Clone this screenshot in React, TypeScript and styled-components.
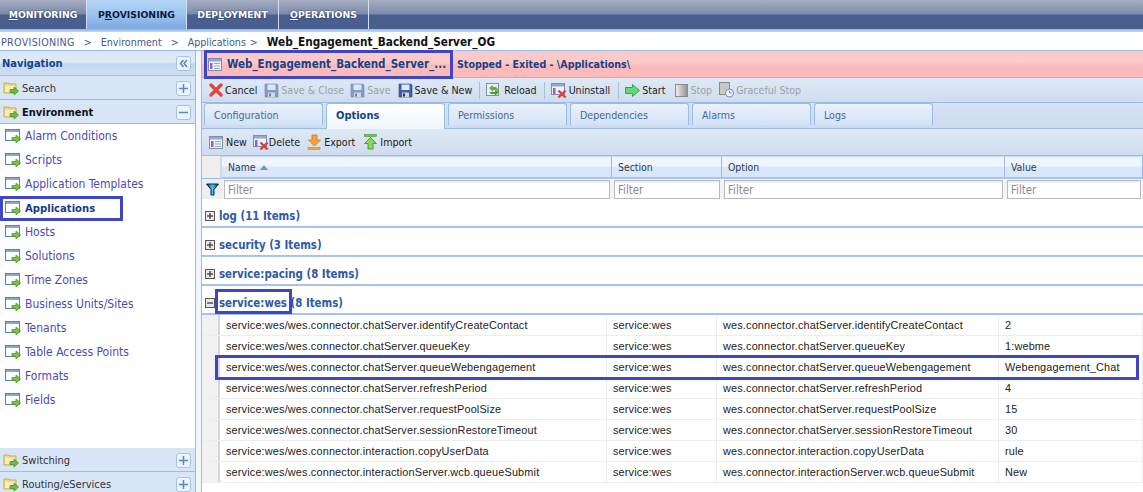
import React from "react";
import styled, { createGlobalStyle } from "styled-components";

const Global = createGlobalStyle`
  html, body { margin: 0; padding: 0; background: #fff; }
  * { box-sizing: border-box; }
`;
const COND = `"DejaVu Sans Condensed", "DejaVu Sans", sans-serif`;
const ARIAL = `"Liberation Sans", Arial, sans-serif`;

const Page = styled.div`
  position: relative; width: 1143px; height: 492px; overflow: hidden; background: #fff;
  font-family: ${COND}; font-size: 11px;
`;
const TopNav = styled.div`
  display: flex; height: 29px;
  background: linear-gradient(#a4adc0 0, #7d8aa8 14px, #495f90 15px, #495f90 100%);
`;
const TopTab = styled.div<{ $active?: boolean; $w: number }>`
  width: ${p => p.$w}px; display: flex; align-items: center; justify-content: center;
  border-right: 1px solid #d5deee;
  font: bold 9.3px "DejaVu Sans", sans-serif;
  color: ${p => (p.$active ? "#0d1a3a" : "#fff")};
  text-shadow: ${p => (p.$active ? "none" : "0 0 2px #24345c")};
  background: ${p => (p.$active ? "linear-gradient(#b5d6f8, #9cc3ef 50%, #7aa8e0)" : "transparent")};
`;
const NavRule = styled.div`
  height: 3px; background: linear-gradient(#8fb3e4, #c5d9f1);
`;
const Breadcrumb = styled.div`
  height: 18px; display: flex; align-items: center; padding: 1px 0 0 1px; white-space: pre;
  color: #3c5a94; font: 10.6px ${COND};
`;
const Crumb = styled.span<{ $gap: number; $wide?: boolean }>`
  margin-right: ${p => p.$gap}px;
  letter-spacing: ${p => (p.$wide ? "0.33px" : "0")};
`;
const CrumbNow = styled.span`
  font: bold 11.7px ${COND}; color: #111; margin-left: 5px;
`;
const Body = styled.div`
  display: flex; height: 446px; border-top: 1px solid #99bbe8;
`;
const Sidebar = styled.div`
  width: 196px; display: flex; flex-direction: column; border-right: 1px solid #99bbe8;
`;
const Gutter = styled.div`
  width: 5px; background: #f1f6fc;
`;
const SideHead = styled.div`
  height: 25px; display: flex; align-items: center; justify-content: space-between; padding: 1px 4px 0 2px;
  background: linear-gradient(#d9e6f7 0, #e0ebf9 45%, #c3d7f1 55%, #cfe0f5 100%);
  border-bottom: 1px solid #99bbe8;
  color: #15428b; font: bold 11px ${COND};
`;
const SideTool = styled.div`
  width: 15px; height: 15px; border: 1px solid #a6c2e8; border-radius: 3px; background: #eef4fc;
  display: flex; align-items: center; justify-content: center;
`;
const Accordion = styled.div<{ $open?: boolean }>`
  height: 24px; flex-shrink: 0; display: flex; align-items: center; padding: 1px 4px 0 3px; gap: 3px;
  background: #d8e5f6; border-bottom: 1px solid #99bbe8;
  color: ${p => (p.$open ? "#111" : "#333")};
  font: ${p => (p.$open ? "bold 11px" : "11px")} ${COND};
  > span { flex: 1; }
`;
const NavList = styled.div`
  flex: 1; background: #fff;
`;
const NavItem = styled.div<{ $active?: boolean }>`
  height: 24px; display: flex; align-items: center; padding-left: 5px; gap: 4px;
  color: ${p => (p.$active ? "#17398c" : "#4a4bb0")};
  font: ${p => (p.$active ? "bold 11.2px" : "12px")} ${COND};
`;
const Main = styled.div`
  flex: 1; min-width: 0; border-left: 1px solid #99bbe8; display: flex; flex-direction: column;
`;
const TitleBar = styled.div`
  height: 27px; flex-shrink: 0; background: linear-gradient(#fdc9c9 0, #fdc9c9 45%, #fdbaba 55%, #fdbaba 100%);
  display: flex; align-items: center; padding-left: 6px; color: #15428b;
  font: bold 10.6px ${COND}; border-bottom: 1px solid #99bbe8;
`;
const TitleName = styled.span`
  width: 230px; margin-left: 4px; font: bold 11.5px ${COND}; white-space: nowrap;
`;
const Toolbar = styled.div<{ $h: number }>`
  height: ${p => p.$h}px; display: flex; align-items: center; padding-left: 7px;
  background: linear-gradient(#dfe9f6, #cfdcee);
  border-bottom: 1px solid #99bbe8; flex-shrink: 0;
`;
const ToolBtn = styled.div<{ $off?: boolean; $gap?: number; $mr?: number }>`
  display: flex; align-items: center; gap: ${p => p.$gap ?? 2}px; margin-right: ${p => p.$mr ?? 7}px;
  color: ${p => (p.$off ? "#9aa0a8" : "#1b1b1b")}; font: 10.6px ${COND}; white-space: nowrap;
`;
const Sep = styled.div`
  width: 1px; height: 17px; background: #aabdd8; margin-right: 6px;
`;
const TabStrip = styled.div`
  height: 26px; display: flex; align-items: flex-end; padding: 0 0 3px 2px; gap: 3px;
  background: linear-gradient(#d5e2f3, #cedcef); border-bottom: 1px solid #99bbe8; flex-shrink: 0;
`;
const Tab = styled.div<{ $active?: boolean }>`
  width: 119px; padding: ${p => (p.$active ? "0 0 3px 9px" : "1px 0 0 9px")}; display: flex; align-items: center;
  border: 1px solid #99bbe8; border-bottom: 0; border-radius: 3px 3px 0 0;
  color: ${p => (p.$active ? "#15428b" : "#4a6690")};
  font: ${p => (p.$active ? "bold 11px" : "10.6px")} ${COND};
  background: ${p => (p.$active ? "linear-gradient(#fff, #f0f6fd)" : "linear-gradient(#e9f1fb, #d3e3f8)")};
  margin-bottom: ${p => (p.$active ? "-4px" : "0")};
  height: ${p => (p.$active ? "26px" : "22px")};
  z-index: ${p => (p.$active ? 1 : 0)};
`;
const GridHead = styled.div`
  display: grid; grid-template-columns: 20px 390px 110px 283px 1fr; height: 23px; flex-shrink: 0;
`;
const HeadCorner = styled.div`
  background: #eeeeee; border-bottom: 1px solid #99bbe8; border-right: 2px solid #d8d8d8;
`;
const HeadCell = styled.div`
  display: flex; align-items: center; gap: 4px; padding-left: 6px; color: #2c3b55; font: 10.4px ${COND};
  background: linear-gradient(#eff5fd 0, #eff5fd 45%, #dae7f8 50%, #dae7f8 100%);
  border-right: 1px solid #99bbe8; border-bottom: 2px solid #a9c4ea; border-top: 1px solid #c9dbf3;
`;
const FilterRow = styled.div`
  display: grid; grid-template-columns: 20px 390px 110px 283px 1fr; height: 20px; flex-shrink: 0;
`;
const FilterIconCell = styled.div`
  background: #eeeeee; display: flex; align-items: center; justify-content: center;
`;
const FilterCell = styled.div`
  padding: 1px 2px 0 2px; background: #f4f4f4;
`;
const FilterInput = styled.div`
  height: 19px; border: 1px solid #b5b8c8; background: linear-gradient(#e8e8e8 0, #fff 3px);
  color: #8a8a8a; font: 11.4px ${COND}; padding: 2px 0 0 3px;
`;
const GroupRow = styled.div`
  height: 29px; flex-shrink: 0; display: flex; align-items: center; padding: 6px 0 0 3px; gap: 4px;
  color: #2e5aa6; font: bold 11.4px ${COND};
  border-bottom: 2px solid #a5c2ea;
`;
const Expander = styled.div<{ $open?: boolean }>`
  width: 10px; height: 10px; border: 1px solid #555; background: #e8e8e8; position: relative;
  &::before { content: ""; position: absolute; left: 1px; right: 1px; top: 3px; height: 2px; background: #333; transform: scaleY(.6); }
  &::after { content: ""; position: absolute; top: 1px; bottom: 1px; left: 3px; width: 2px; background: #333; transform: scaleX(.6); display: ${p => (p.$open ? "none" : "block")}; }
`;
const DataRow = styled.div`
  display: grid; grid-template-columns: 18px 387px 110px 282px 1fr; height: 21px; flex-shrink: 0;
  border-bottom: 1px solid #ededed; font: 10.9px ${ARIAL}; color: #222; letter-spacing: 0.16px;
`;
const RowGutter = styled.div`
  background: #f1f1f1; border-right: 2px solid #d6d6d6;
`;
const Cell = styled.div`
  display: flex; align-items: center; padding: 0 0 1px 6px; border-right: 1px solid #ededed; white-space: nowrap; overflow: hidden;
`;
const Highlight = styled.div<{ $x: number; $y: number; $w: number; $h: number }>`
  position: absolute; left: ${p => p.$x}px; top: ${p => p.$y}px; width: ${p => p.$w}px; height: ${p => p.$h}px;
  border: 3px solid #3f46c4; pointer-events: none; z-index: 5;
`;

const FolderArrow = () => (
  <svg width="16" height="16" viewBox="0 0 16 16">
    <path d="M1 3h4l1 1h7v9H1z" fill="#f6dc85" stroke="#c9a94e" />
    <path d="M2 6h10v6H2z" fill="#fbeeb8" />
    <path d="M7 9.500h4V7l4.500 4L11 15v-2.500H7z" fill="#6fbb3c" stroke="#3f8a22" strokeWidth=".7" />
  </svg>
);
const WinArrow = () => (
  <svg width="16" height="16" viewBox="0 0 16 16" style={{ flexShrink: 0 }}>
    <rect x=".5" y="1.5" width="14" height="11" fill="#fff" stroke="#5b7fbe" />
    <rect x="1" y="2" width="13" height="2" fill="#8aa7d8" />
    <path d="M7 9.500h4V7l4.500 4L11 15v-2.500H7z" fill="#7cc142" stroke="#3f8a22" strokeWidth=".7" />
  </svg>
);
const AppForm = () => (
  <svg width="15" height="15" viewBox="0 0 15 15">
    <rect x=".5" y="1.5" width="13" height="12" fill="#f4f4f4" stroke="#7b8fb0" />
    <rect x="1" y="2" width="12" height="2.5" fill="#8ea9d6" />
    <rect x="2" y="6" width="2.5" height="6" fill="#9a5ad8" />
    <path d="M6 6.500h6M6 9h6M6 11.500h6" stroke="#9aa7bb" />
  </svg>
);
const FormDelete = () => (
  <svg width="16" height="16" viewBox="0 0 16 16">
    <rect x=".5" y="1.5" width="13" height="11" fill="#f4f4f4" stroke="#7b8fb0" />
    <rect x="1" y="2" width="12" height="2.5" fill="#8ea9d6" />
    <rect x="2" y="6" width="2.5" height="6" fill="#9a5ad8" />
    <path d="M7.500 8.500l7 7M14.500 8.500l-7 7" stroke="#d9413c" strokeWidth="2.4" />
  </svg>
);
const RedX = () => (
  <svg width="14" height="14" viewBox="0 0 14 14">
    <path d="M2 2l10 10M12 2L2 12" stroke="#e2453f" strokeWidth="3.4" strokeLinecap="round" />
  </svg>
);
const Floppy = ({ off }: { off?: boolean }) => (
  <svg width="15" height="15" viewBox="0 0 15 15" opacity={off ? 0.55 : 1}>
    <path d="M1 1h12l1 1v12H1z" fill="#3d5fae" stroke="#2b4384" strokeWidth=".6" />
    <rect x="3.5" y="1.5" width="8" height="5.5" fill="#dfe7f5" />
    <rect x="4" y="9.5" width="7" height="4.5" fill="#d5d5d5" />
    <rect x="5" y="10.5" width="2" height="3" fill="#333" />
  </svg>
);
const Reload = () => (
  <svg width="15" height="16" viewBox="0 0 15 16">
    <rect x=".5" y="1.5" width="12" height="12" fill="#eef2f8" stroke="#7b8fb0" />
    <path d="M3 6l4-3v2h3l3 3v2l-3-2H7v2z" fill="#5fb33a" />
    <path d="M13 10l-4 4v-2H5l-2-2h6V8z" fill="#4f9c2e" />
  </svg>
);
const Play = () => (
  <svg width="15" height="13" viewBox="0 0 15 13">
    <path d="M.5 3.500h7V.5l7 6-7 6v-3h-7z" fill="#5fdc7a" stroke="#38a455" />
  </svg>
);
const StopIcon = () => (
  <svg width="13" height="13" viewBox="0 0 13 13">
    <defs><linearGradient id="st" x1="0" x2="1"><stop offset="0" stopColor="#f2f2f2" /><stop offset="1" stopColor="#8f8f8f" /></linearGradient></defs>
    <rect x=".5" y=".5" width="12" height="12" fill="url(#st)" stroke="#8a8a8a" />
  </svg>
);
const GracefulIcon = () => (
  <svg width="15" height="16" viewBox="0 0 15 16">
    <rect x=".5" y=".5" width="10" height="12" fill="#c8c8c8" stroke="#8a8a8a" />
    <circle cx="10.5" cy="11" r="4" fill="#eef3fb" stroke="#6a8abd" />
    <path d="M10.500 8.500V11h2" stroke="#6a8abd" fill="none" />
  </svg>
);
const ExportIcon = () => (
  <svg width="15" height="16" viewBox="0 0 15 16">
    <path d="M5 1h5v5h3.500L7.500 12 1.500 6H5z" fill="#f5a53e" stroke="#c9771e" strokeWidth=".8" />
    <rect x="1" y="13.500" width="12" height="2" fill="#f2a23c" stroke="#c9771e" strokeWidth=".5" />
  </svg>
);
const ImportIcon = () => (
  <svg width="15" height="16" viewBox="0 0 15 16">
    <rect x="1.500" y=".5" width="12" height="2" fill="#6cc24a" stroke="#3f8a22" strokeWidth=".5" />
    <path d="M5 15h5V9.500h3.500L7.500 3.500 1.500 9.500H5z" fill="#8ad65f" stroke="#3f8a22" strokeWidth=".8" />
  </svg>
);
const Funnel = () => (
  <svg width="13" height="13" viewBox="0 0 13 13">
    <defs><linearGradient id="fn" x1="0" x2="1"><stop offset="0" stopColor="#0c2a4c" /><stop offset=".5" stopColor="#43c5ee" /><stop offset="1" stopColor="#0c2a4c" /></linearGradient></defs>
    <path d="M.5 1h12L8 6.500V12H5V6.500z" fill="url(#fn)" stroke="#0c2a4c" />
  </svg>
);
const SortUp = () => (
  <svg width="8" height="5" viewBox="0 0 8 5"><path d="M0 5l4-5 4 5z" fill="#6f96cc" /></svg>
);
const Chevrons = () => (
  <svg width="9" height="9" viewBox="0 0 9 9" fill="none" stroke="#4a78b8" strokeWidth="1.3">
    <path d="M4.500 1L1.500 4.500l3 3.500M8 1L5 4.500 8 8" />
  </svg>
);
const Sign = ({ minus }: { minus?: boolean }) => (
  <svg width="9" height="9" viewBox="0 0 9 9" stroke="#5b86c4" strokeWidth="1.500">
    <path d="M0 4.500h9" />
    {!minus && <path d="M4.500 0v9" />}
  </svg>
);

const navItems = ["Alarm Conditions", "Scripts", "Application Templates", "Applications", "Hosts", "Solutions", "Time Zones", "Business Units/Sites", "Tenants", "Table Access Points", "Formats", "Fields"];
const tabs = ["Configuration", "Options", "Permissions", "Dependencies", "Alarms", "Logs"];
const groups = ["log (11 Items)", "security (3 Items)", "service:pacing (8 Items)"];
const rows: [string, string][] = [
  ["chatServer.identifyCreateContact", "2"],
  ["chatServer.queueKey", "1:webme"],
  ["chatServer.queueWebengagement", "Webengagement_Chat"],
  ["chatServer.refreshPeriod", "4"],
  ["chatServer.requestPoolSize", "15"],
  ["chatServer.sessionRestoreTimeout", "30"],
  ["interaction.copyUserData", "rule"],
  ["interactionServer.wcb.queueSubmit", "New"],
];
const Cols = ["Name", "Section", "Option", "Value"];

export default function App() {
  return (
    <Page>
      <Global />
      <TopNav>
        <TopTab $w={87}><span><u>M</u>ONITORING</span></TopTab>
        <TopTab $w={100} $active><span>P<u>R</u>OVISIONING</span></TopTab>
        <TopTab $w={92}><span>DEP<u>L</u>OYMENT</span></TopTab>
        <TopTab $w={90}><span><u>O</u>PERATIONS</span></TopTab>
      </TopNav>
      <NavRule />
      <Breadcrumb>
        <Crumb $gap={9} $wide>PROVISIONING</Crumb><Crumb $gap={9}>&gt;</Crumb>
        <Crumb $gap={9}>Environment</Crumb><Crumb $gap={9}>&gt;</Crumb>
        <Crumb $gap={4}>Applications</Crumb><Crumb $gap={4}>&gt;</Crumb>
        <CrumbNow>Web_Engagement_Backend_Server_OG</CrumbNow>
      </Breadcrumb>
      <Body>
        <Sidebar>
          <SideHead>Navigation<SideTool><Chevrons /></SideTool></SideHead>
          <Accordion><FolderArrow /><span>Search</span><SideTool><Sign /></SideTool></Accordion>
          <Accordion $open><FolderArrow /><span>Environment</span><SideTool><Sign minus /></SideTool></Accordion>
          <NavList>
            {navItems.map(n => (
              <NavItem key={n} $active={n === "Applications"}><WinArrow />{n}</NavItem>
            ))}
          </NavList>
          <Accordion><FolderArrow /><span>Switching</span><SideTool><Sign /></SideTool></Accordion>
          <Accordion><FolderArrow /><span>Routing/eServices</span><SideTool><Sign /></SideTool></Accordion>
        </Sidebar>
        <Gutter />
        <Main>
          <TitleBar>
            <AppForm />
            <TitleName>Web_Engagement_Backend_Server_...</TitleName>
            Stopped - Exited - \Applications\
          </TitleBar>
          <Toolbar $h={25}>
            <ToolBtn><RedX />Cancel</ToolBtn>
            <ToolBtn $off $mr={6}><Floppy off />Save &amp; Close</ToolBtn>
            <ToolBtn $off><Floppy off />Save</ToolBtn>
            <ToolBtn><Floppy />Save &amp; New</ToolBtn>
            <Sep />
            <ToolBtn $gap={3}><Reload />Reload</ToolBtn>
            <Sep />
            <ToolBtn $mr={8}><FormDelete />Uninstall</ToolBtn>
            <Sep />
            <ToolBtn $mr={10}><Play />Start</ToolBtn>
            <ToolBtn $off><StopIcon />Stop</ToolBtn>
            <ToolBtn $off><GracefulIcon />Graceful Stop</ToolBtn>
          </Toolbar>
          <TabStrip>
            {tabs.map(t => <Tab key={t} $active={t === "Options"}>{t}</Tab>)}
          </TabStrip>
          <Toolbar $h={27}>
            <ToolBtn $mr={6}><AppForm />New</ToolBtn>
            <ToolBtn $gap={0}><FormDelete />Delete</ToolBtn>
            <ToolBtn $mr={8}><ExportIcon />Export</ToolBtn>
            <ToolBtn><ImportIcon />Import</ToolBtn>
          </Toolbar>
          <GridHead>
            <HeadCorner />
            {Cols.map(c => <HeadCell key={c}>{c}{c === "Name" && <SortUp />}</HeadCell>)}
          </GridHead>
          <FilterRow>
            <FilterIconCell><Funnel /></FilterIconCell>
            {Cols.map(c => <FilterCell key={c}><FilterInput>Filter</FilterInput></FilterCell>)}
          </FilterRow>
          {groups.map(g => <GroupRow key={g}><Expander />{g}</GroupRow>)}
          <GroupRow><Expander $open />service:wes (8 Items)</GroupRow>
          {rows.map(([k, v]) => (
            <DataRow key={k}>
              <RowGutter />
              <Cell>service:wes/wes.connector.{k}</Cell>
              <Cell>service:wes</Cell>
              <Cell>wes.connector.{k}</Cell>
              <Cell>{v}</Cell>
            </DataRow>
          ))}
        </Main>
      </Body>
      <Highlight $x={204} $y={50} $w={249} $h={29} />
      <Highlight $x={0} $y={196} $w={123} $h={25} />
      <Highlight $x={215} $y={289} $w={77} $h={25} />
      <Highlight $x={215} $y={355} $w={924} $h={25} />
    </Page>
  );
}
